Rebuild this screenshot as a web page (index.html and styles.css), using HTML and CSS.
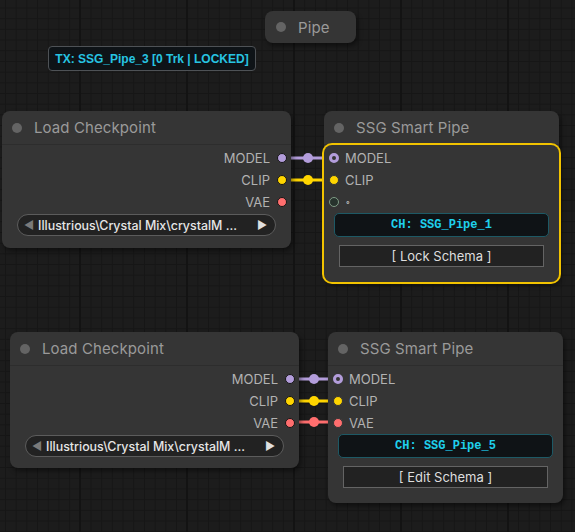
FILE: index.html
```html
<!DOCTYPE html>
<html lang="en">
<head>
<meta charset="utf-8">
<title>Graph</title>
<link rel="stylesheet" href="styles.css">
</head>
<body>
<div class="canvas">
  <svg class="links" width="575" height="532" viewBox="0 0 575 532">
    <g stroke-width="3" stroke-linecap="round">
      <line x1="282" y1="158" x2="334" y2="158" stroke="#b39ddb"/>
      <line x1="282" y1="180" x2="334" y2="180" stroke="#ffd500"/>
      <line x1="290" y1="379" x2="338" y2="379" stroke="#b39ddb"/>
      <line x1="290" y1="401" x2="338" y2="401" stroke="#ffd500"/>
      <line x1="290" y1="422" x2="338" y2="422" stroke="#ff6e6e"/>
    </g>
    <circle cx="308" cy="158" r="5" fill="#b39ddb"/>
    <circle cx="308" cy="180" r="5" fill="#ffd500"/>
    <circle cx="314" cy="379" r="5" fill="#b39ddb"/>
    <circle cx="314" cy="401" r="5" fill="#ffd500"/>
    <circle cx="314" cy="422" r="5" fill="#ff6e6e"/>
  </svg>

  <div class="node pipe-node">
    <span class="title-dot"></span>
    <span class="title-text">Pipe</span>
  </div>

  <div class="tx-badge">TX: SSG_Pipe_3 [0 Trk | LOCKED]</div>

  <!-- upper pair -->
  <div class="node loader loader-a">
    <div class="node-title"><span class="title-dot"></span><span class="title-text">Load Checkpoint</span></div>
    <div class="node-body">
      <div class="slot out"><span class="slot-label">MODEL</span><span class="dot model"></span></div>
      <div class="slot out"><span class="slot-label">CLIP</span><span class="dot clip"></span></div>
      <div class="slot out"><span class="slot-label">VAE</span><span class="dot vae"></span></div>
      <div class="combo"><span class="arrow left">◀</span><span class="combo-value">Illustrious\Crystal Mix\crystalM ...</span><span class="arrow right">▶</span></div>
    </div>
  </div>

  <div class="node pipe-smart pipe-a">
    <div class="node-title"><span class="title-dot"></span><span class="title-text">SSG Smart Pipe</span></div>
    <div class="node-body selected">
      <div class="slot in"><span class="dot model ring"></span><span class="slot-label">MODEL</span></div>
      <div class="slot in"><span class="dot clip"></span><span class="slot-label">CLIP</span></div>
      <div class="slot in"><span class="dot empty"></span><span class="slot-label small">∘</span></div>
      <div class="channel">CH: SSG_Pipe_1</div>
      <div class="schema-btn">[ Lock Schema ]</div>
    </div>
  </div>

  <!-- lower pair -->
  <div class="node loader loader-b">
    <div class="node-title"><span class="title-dot"></span><span class="title-text">Load Checkpoint</span></div>
    <div class="node-body">
      <div class="slot out"><span class="slot-label">MODEL</span><span class="dot model"></span></div>
      <div class="slot out"><span class="slot-label">CLIP</span><span class="dot clip"></span></div>
      <div class="slot out"><span class="slot-label">VAE</span><span class="dot vae"></span></div>
      <div class="combo"><span class="arrow left">◀</span><span class="combo-value">Illustrious\Crystal Mix\crystalM ...</span><span class="arrow right">▶</span></div>
    </div>
  </div>

  <div class="node pipe-smart pipe-b">
    <div class="node-title"><span class="title-dot"></span><span class="title-text">SSG Smart Pipe</span></div>
    <div class="node-body">
      <div class="slot in"><span class="dot model ring"></span><span class="slot-label">MODEL</span></div>
      <div class="slot in"><span class="dot clip"></span><span class="slot-label">CLIP</span></div>
      <div class="slot in"><span class="dot vae"></span><span class="slot-label">VAE</span></div>
      <div class="channel">CH: SSG_Pipe_5</div>
      <div class="schema-btn">[ Edit Schema ]</div>
    </div>
  </div>
</div>
</body>
</html>
```

FILE: styles.css
```css
* { box-sizing: border-box; }

html, body {
  margin: 0;
  padding: 0;
  background: #1b1b1b;
}

body {
  font-family: Inter, "Liberation Sans", Arial, sans-serif;
}

/* graph canvas with fine grid and coarse major lines */
.canvas {
  position: relative;
  width: 575px;
  height: 532px;
  overflow: hidden;
  background-color: #1c1c1c;
  background-image:
    linear-gradient(90deg, #131313 2px, transparent 2px),
    linear-gradient(90deg, #161616 1px, transparent 1px),
    linear-gradient(#161616 1px, transparent 1px);
  background-size: 107px 107px, 10.7px 10.7px, 10.7px 10.7px;
  background-position: 79px 0, 5px 0, 0 7.5px;
}

.links {
  position: absolute;
  left: 0;
  top: 0;
}

/* nodes */
.node {
  position: absolute;
  background: #353535;
  border-radius: 8px;
  box-shadow: 2px 3px 5px rgba(0, 0, 0, 0.45);
  color: #aaa;
}

.node-title {
  height: 34px;
  display: flex;
  align-items: center;
  gap: 12px;
  padding-left: 10px;
  border-bottom: 1px solid #2d2d2d;
}

.title-dot {
  width: 10px;
  height: 10px;
  border-radius: 50%;
  background: #646464;
  flex: none;
}

.title-text {
  font-size: 15px;
  color: #9a9a9a;
  letter-spacing: 0.1px;
}

.pipe-node {
  left: 265px;
  top: 11px;
  width: 91px;
  height: 32px;
  display: flex;
  align-items: center;
  gap: 12px;
  padding-left: 11px;
}

.tx-badge {
  position: absolute;
  left: 48px;
  top: 46px;
  width: 208px;
  height: 25px;
  display: flex;
  align-items: center;
  justify-content: center;
  background: #0e1317;
  border: 1px solid #4e5256;
  border-radius: 4px;
  color: #27c4e2;
  font-family: "Liberation Sans", Arial, sans-serif;
  font-weight: bold;
  font-size: 12px;
}

.node-body {
  padding-top: 2px;
  display: flex;
  flex-direction: column;
}

.slot {
  height: 22px;
  display: flex;
  align-items: center;
  font-size: 13px;
  color: #b2b2b2;
}

.slot.out {
  justify-content: flex-end;
  gap: 7px;
  padding-right: 4px;
}

.slot.in {
  gap: 6px;
  padding-left: 5px;
}

.slot-label.small {
  font-size: 9px;
  color: #bbb;
}

.dot {
  width: 10px;
  height: 10px;
  border-radius: 50%;
  border: 1px solid #151515;
  flex: none;
}

.dot.model { background: #b39ddb; }
.dot.clip { background: #ffd500; }
.dot.vae { background: #ff6e6e; }

/* input sockets sit without the dark rim */
.slot.in .dot.clip,
.slot.in .dot.vae { border-color: #353535; }

.slot.in .dot.ring {
  background: #353535;
  border: 3px solid #b39ddb;
}

.slot.in .dot.empty {
  background: #27332d;
  border: 1px solid #7f9c86;
}

/* checkpoint loader */
.loader { width: 289px; }
.loader-a { left: 2px; top: 111px; height: 137px; }
.loader-b { left: 10px; top: 332px; height: 136px; }

.combo {
  margin: 1px 15px 0;
  height: 22px;
  border-radius: 11px;
  background: #222;
  border: 1px solid #5c5c5c;
  display: flex;
  align-items: center;
  padding: 0 8px 0 6px;
  font-size: 13px;
}

.arrow {
  font-size: 11px;
  flex: none;
}

.arrow.left { color: #7a7a7a; }
.arrow.right { color: #e0e0e0; margin-left: auto; }

.combo-value {
  color: #e6e6e6;
  margin-left: 4px;
  white-space: nowrap;
  font-weight: 500;
  font-size: 12.4px;
}

/* smart pipe */
.pipe-smart { width: 235px; }
.pipe-a { left: 324px; top: 111px; height: 171px; }
.pipe-b { left: 328px; top: 332px; height: 171px; }

.node-body.selected {
  border-radius: 8px;
  box-shadow: 0 0 0 2px #f2c300;
  height: 137px;
}

.channel {
  margin: 0 10px;
  height: 24px;
  background: #0f1316;
  border: 1px solid #1d5965;
  border-radius: 5px;
  display: flex;
  align-items: center;
  justify-content: center;
  color: #1fd0ec;
  font-family: "Liberation Mono", "Courier New", monospace;
  font-weight: bold;
  font-size: 12px;
}

.schema-btn {
  margin: 8px 15px 0;
  height: 22px;
  background: #222;
  border: 1px solid #646464;
  display: flex;
  align-items: center;
  justify-content: center;
  color: #dedede;
  font-size: 13px;
}
```
